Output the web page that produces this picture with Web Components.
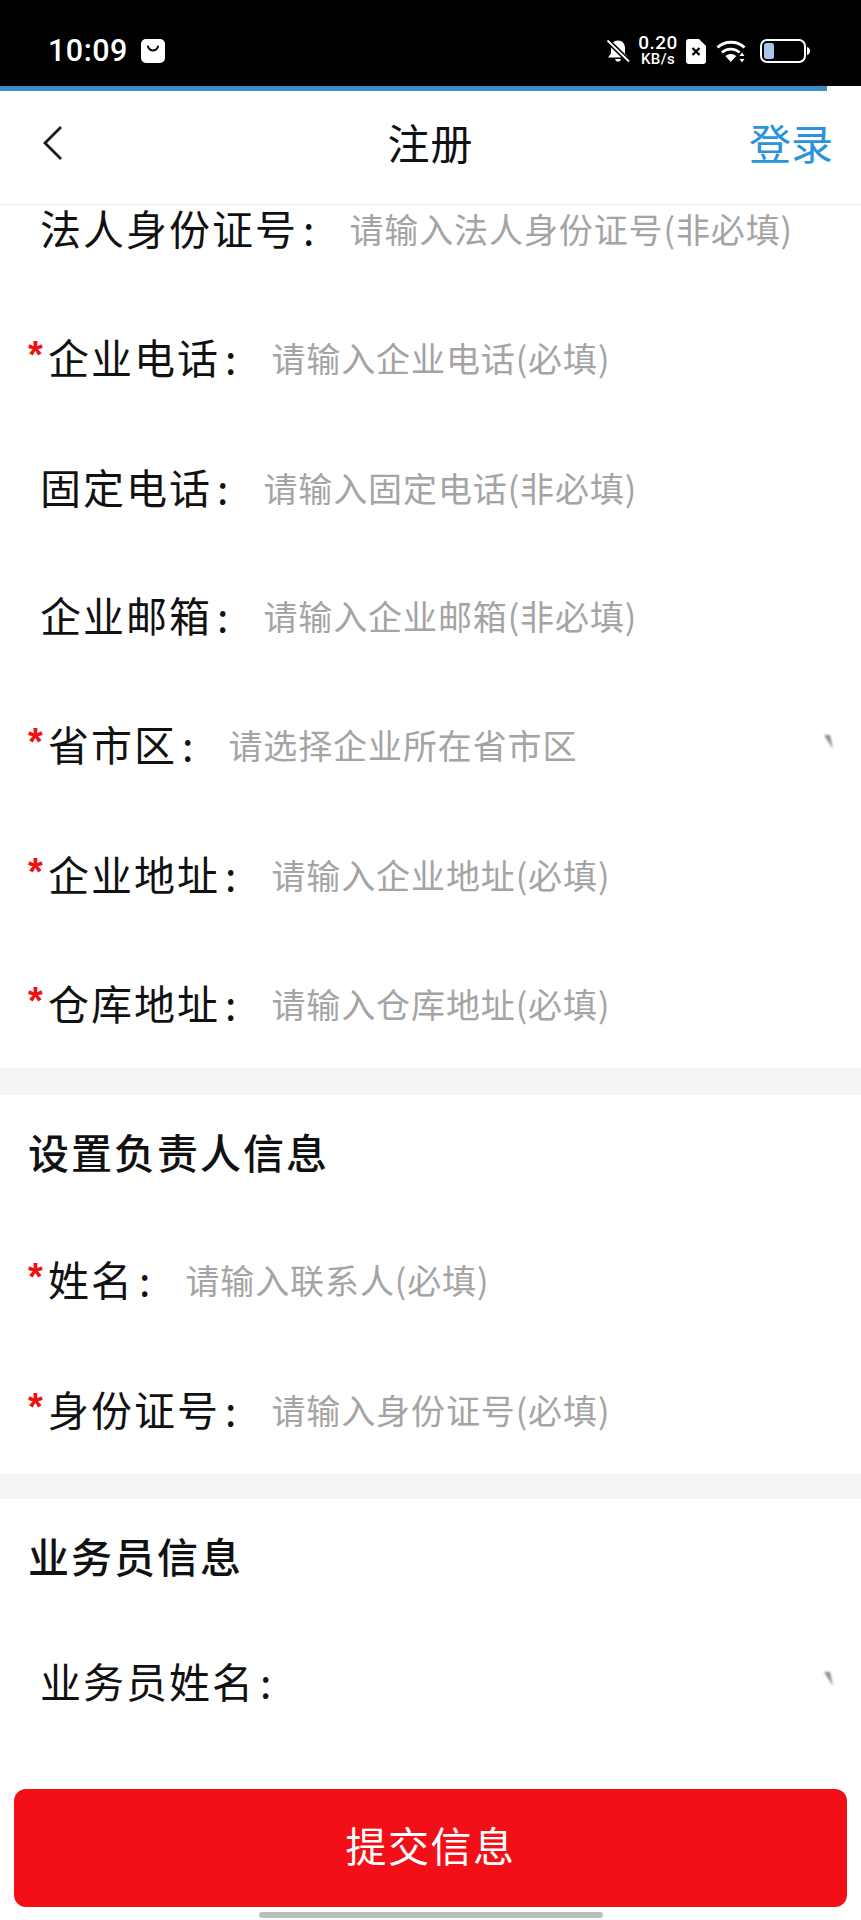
<!DOCTYPE html>
<html lang="zh">
<head>
<meta charset="utf-8">
<title>注册</title>
<style>
html,body{margin:0;padding:0;background:#fff}
body{width:861px;height:1920px;overflow:hidden;font-family:"Noto Sans CJK SC","Noto Sans",sans-serif}
app-shell{height:1920px}
</style>
</head>
<body>
<app-shell>
  <status-bar></status-bar>
  <nav-bar title-text="注册" action="登录"></nav-bar>
  <form-scroll>
    <form-row label="法人身份证号" placeholder="请输入法人身份证号(非必填)" h="129"></form-row>
    <form-row required label="企业电话" placeholder="请输入企业电话(必填)" h="130"></form-row>
    <form-row label="固定电话" placeholder="请输入固定电话(非必填)" h="129"></form-row>
    <form-row label="企业邮箱" placeholder="请输入企业邮箱(非必填)" h="128"></form-row>
    <form-row required select label="省市区" placeholder="请选择企业所在省市区" h="130"></form-row>
    <form-row required label="企业地址" placeholder="请输入企业地址(必填)" h="130"></form-row>
    <form-row required label="仓库地址" placeholder="请输入仓库地址(必填)" h="128"></form-row>
    <section-gap></section-gap>
    <section-title h="119" style="--shift:-8px">设置负责人信息</section-title>
    <form-row required label="姓名" placeholder="请输入联系人(必填)" h="131"></form-row>
    <form-row required label="身份证号" placeholder="请输入身份证号(必填)" h="129"></form-row>
    <section-gap style="--gap:25px"></section-gap>
    <section-title h="116" style="--shift:-5px">业务员信息</section-title>
    <form-row select label="业务员姓名" placeholder="" h="133"></form-row>
  </form-scroll>
  <submit-bar>提交信息</submit-bar>
</app-shell>
<script>
function def(name, css, html, init){
  customElements.define(name, class extends HTMLElement{
    connectedCallback(){
      if(this.shadowRoot) return;
      const r=this.attachShadow({mode:'open'});
      r.innerHTML='<style>'+css+'</style>'+(typeof html==='function'?html(this):html);
      if(init) init(this,r);
    }
  });
}
const esc=s=>String(s==null?'':s);

def('app-shell',':host{display:flex;flex-direction:column;width:861px;height:1920px;background:#fff;overflow:hidden}','<slot></slot>');

def('status-bar',`
:host{display:block;flex:none;background:#fff}
.bar{height:86px;background:#000;color:#fff;display:flex;align-items:center;padding:16px 51px 0 48px;box-sizing:border-box}
.time{font:500 30.500px/1 Roboto,"Noto Sans",sans-serif;letter-spacing:.5px;margin-right:13px}
.spacer{flex:1}
.net{display:flex;flex-direction:column;align-items:center;font-family:Roboto,"Noto Sans",sans-serif;font-weight:500;margin:-2px 8px 0 8px;width:40px}
.net b{font-weight:500;font-size:19px;line-height:19px;letter-spacing:.5px}
.net i{font-style:normal;font-size:15px;line-height:15px;letter-spacing:.4px}
svg{display:block;flex:none}
.progress{height:5px;width:827px;background:#3a8fc6}
`,`
<div class="bar">
  <span class="time">10:09</span>
  <svg width="24" height="24" viewBox="0 0 24 24"><rect width="24" height="24" rx="5" fill="#fff"/><path d="M7 7.500c1 3 3 4 5 4s4-1 5-4" fill="none" stroke="#000" stroke-width="2" stroke-linecap="round"/></svg>
  <span class="spacer"></span>
  <svg width="24" height="24" viewBox="0 0 24 24"><path d="M12 1.500c-4.400 0-7 3.300-7 7.500v5.500L2 18.500h20l-3-4V9c0-4.200-2.600-7.500-7-7.500z" fill="#fff"/><path d="M9 20h6c-.4 1.700-1.500 2.600-3 2.600S9.400 21.700 9 20z" fill="#fff"/><path d="M1.500 1.500 23 22.500" stroke="#000" stroke-width="5"/><path d="M1.500 1.500 23 22.500" stroke="#fff" stroke-width="1.800"/></svg>
  <span class="net"><b>0.20</b><i>KB/s</i></span>
  <svg width="20" height="25" viewBox="0 0 20 25"><path d="M3 0h10l7 7v15a3 3 0 0 1-3 3H3a3 3 0 0 1-3-3V3a3 3 0 0 1 3-3z" fill="#fff"/><path d="M6.500 9l7 7m0-7-7 7" stroke="#000" stroke-width="2.400"/></svg>
  <svg style="margin-left:10px" width="31" height="23" viewBox="0 0 31 23"><g fill="none" stroke="#fff" stroke-width="2.800"><path d="M1.500 7.500C8.500 .5 21.500 .5 28.500 7.500"/><path d="M6 12.500c4.500-4.500 13-4.500 17.500 0"/></g><path d="M9.500 16c3-2.700 8-2.700 11 0l-5.500 6z" fill="#fff" transform="translate(-.2 0)"/><path d="M26 12.500l2.500 3.500h-5zM26 22.500l2.500-3.500h-5z" fill="#fff"/></svg>
  <svg style="margin-left:13px" width="50" height="24" viewBox="0 0 50 24"><rect x="1" y="1" width="44" height="22" rx="6" fill="none" stroke="#fff" stroke-width="2"/><rect x="4" y="4" width="10" height="16" rx="2.500" fill="#a9c4e8"/><path d="M47 8c2 .5 3 2 3 4s-1 3.500-3 4z" fill="#fff"/></svg>
</div>
<div class="progress"></div>`);

def('nav-bar',`
:host{display:grid;grid-template-columns:1fr auto 1fr;align-items:center;flex:none;height:114px;box-sizing:border-box;border-bottom:1px solid #ececec;background:#fff;padding:0 28px}
svg{display:block;margin:-9px 0 0 14px}
.t{font-size:42px;letter-spacing:1px;line-height:1;color:#111;margin-top:-11px}
.a{justify-self:end;font-size:42px;line-height:1;color:#2a93dc;margin-top:-11px}
`,h=>`<svg width="21" height="36" viewBox="0 0 21 36"><path d="M19 2 3 18l16 16" fill="none" stroke="#1a1a1a" stroke-width="2.800"/></svg>
<span class="t">${esc(h.getAttribute('title-text'))}</span><span class="a">${esc(h.getAttribute('action'))}</span>`);

def('form-scroll',`
:host{display:block;flex:1;min-height:0;overflow:hidden;background:#fff}
.in{margin-top:-41px}
`,'<div class="in"><slot></slot></div>');

def('form-row',`
:host{display:flex;align-items:center;box-sizing:border-box;padding-left:40px;padding-right:24px;background:#fff}
:host([required]){padding-left:28px}
.star{width:20px;flex:none;color:#ee1111;font:700 38px/1 "Liberation Sans",sans-serif;align-self:center;margin-top:-4px;height:40px}
.label{font-size:41px;line-height:42px;letter-spacing:2px;color:#111;white-space:nowrap;margin-right:33px;margin-top:-4px}
.colon{margin-left:5px}
.ph{font-size:34px;line-height:42px;letter-spacing:.9px;color:#a4a4a4;white-space:nowrap;flex:1}
svg{flex:none;display:block;margin-top:-4px}
`,h=>`${h.hasAttribute('required')?'<span class="star">*</span>':''}<span class="label">${esc(h.getAttribute('label'))}<span class="colon">:</span></span>${h.getAttribute('placeholder')?`<span class="ph">${esc(h.getAttribute('placeholder'))}</span>`:'<span class="ph"></span>'}${h.hasAttribute('select')?'<svg width="16" height="24" viewBox="0 0 16 24"><defs><filter id="b" x="-50%" y="-50%" width="200%" height="200%"><feGaussianBlur stdDeviation="1.200"/></filter></defs><path d="M3 4h6l3 14z" fill="#8a8a8a" filter="url(#b)"/></svg>':''}`,
(h)=>{h.style.height=(h.getAttribute('h')||129)+'px'});

def('section-gap',':host{display:block;height:var(--gap,27px);background:#f5f5f5}','');

def('section-title',`
:host{display:flex;align-items:center;box-sizing:border-box;padding:0 28px;background:#fff}
span{font-size:41px;font-weight:500;letter-spacing:2px;line-height:48px;color:#111;margin-top:var(--shift,-10px)}
`,'<span><slot></slot></span>',h=>{h.style.height=(h.getAttribute('h')||116)+'px'});

def('submit-bar',`
:host{display:block;flex:none;background:#fff;padding:0 14px}
.btn{height:118px;border-radius:12px;background:#f30f17;color:#fff;font-size:41px;letter-spacing:1.500px;box-sizing:border-box;padding-bottom:8px;display:flex;align-items:center;justify-content:center}
.home{width:344px;height:6px;border-radius:3px;background:#bdbdbd;margin:5px auto 2px}
`,'<div class="btn"><slot></slot></div><div class="home"></div>');
</script>
</body>
</html>
